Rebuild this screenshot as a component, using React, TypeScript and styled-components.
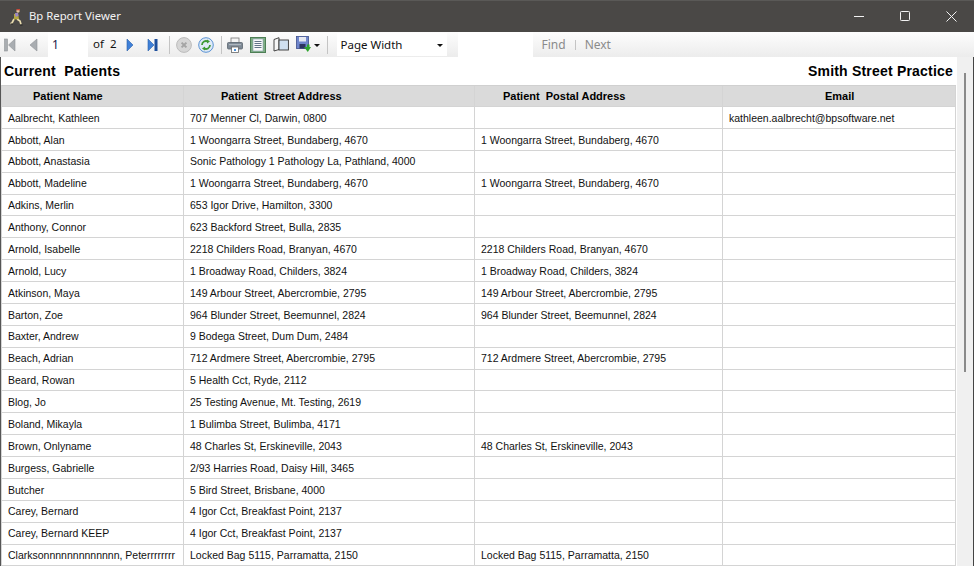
import React from 'react';
import styled, { createGlobalStyle } from 'styled-components';

const GlobalStyle = createGlobalStyle`
  html, body {
    margin: 0;
    height: 100%;
    overflow: hidden;
    background: #f0f0f0;
    font-family: "Liberation Sans", Arial, sans-serif;
  }
  #root { height: 100%; }
`;

const Window = styled.div`
  display: flex;
  flex-direction: column;
  width: 974px;
  height: 566px;
  overflow: hidden;
`;

const TitleBar = styled.div`
  display: flex;
  align-items: center;
  flex: 0 0 32px;
  box-sizing: border-box;
  height: 32px;
  padding-left: 10px;
  background: #4a4846;
  border-top: 1px solid #5a5957;
  color: #f2f2f2;
  font-family: "Noto Sans", "Open Sans", sans-serif;
  font-size: 11.3px;
`;

const TitleText = styled.span`
  margin: -2px 0 0 5px;
  flex: 1;
`;

const WindowButton = styled.div`
  display: flex;
  align-items: center;
  justify-content: center;
  width: 46px;
  height: 30px;
  margin-top: -1px;
`;

const Toolbar = styled.div`
  display: flex;
  align-items: center;
  flex: 0 0 25px;
  height: 25px;
  padding-left: 4px;
  box-sizing: border-box;
  background: linear-gradient(#fdfdfd, #ececec);
  font-size: 12px;
`;

const Tool = styled.div<{ $w: number; $ml?: number }>`
  display: flex;
  align-items: center;
  justify-content: center;
  flex: 0 0 ${p => p.$w}px;
  width: ${p => p.$w}px;
  margin-left: ${p => p.$ml ?? 0}px;
`;

const Sep = styled.div<{ $ml: number }>`
  flex: 0 0 1px;
  height: 18px;
  margin-left: ${p => p.$ml}px;
  background: #c4c4c4;
`;

const PageInput = styled.div`
  flex: 0 0 40px;
  box-sizing: border-box;
  height: 25px;
  margin-left: 10px;
  padding: 4px 0 0 4px;
  background: #fff;
  color: #1a1a4a;
  font-family: "Noto Sans", sans-serif;
  font-size: 12px;
`;

const OfLabel = styled.span<{ $ml: number }>`
  margin: -2px 0 0 ${p => p.$ml}px;
  color: #111;
  font-family: "Noto Sans", sans-serif;
  font-size: 11.5px;
`;

const Combo = styled.div`
  display: flex;
  align-items: center;
  justify-content: space-between;
  flex: 0 0 110px;
  box-sizing: border-box;
  height: 23px;
  margin-left: 9px;
  padding: 0 4px 0 4px;
  background: #fff;
  color: #111;
  font-family: "Noto Sans", sans-serif;
  font-size: 11.5px;
`;

const Caret = styled.span<{ $ml?: number }>`
  width: 0;
  height: 0;
  margin: 1px 0 0 ${p => p.$ml ?? 0}px;
  border-left: 3px solid transparent;
  border-right: 3px solid transparent;
  border-top: 3px solid #111;
`;

const FindBox = styled.div`
  flex: 0 0 75px;
  height: 25px;
  margin-left: 11px;
  background: #fff;
`;

const FindLink = styled.span<{ $ml: number }>`
  margin: 0 0 0 ${p => p.$ml}px;
  color: #8b8b8b;
  font-family: "Noto Sans", sans-serif;
  font-size: 12px;
`;

const FindSep = styled.span`
  width: 1px;
  height: 10px;
  margin-left: 9px;
  background: #c4c4c4;
`;

const Body = styled.div`
  display: flex;
  flex: 1;
  min-height: 0;
  background: #f0f0f0;
  border-left: 1px solid #555;
  border-right: 1px solid #444;
`;

const Report = styled.div`
  flex: 0 0 956px;
  height: 100%;
  background: #fff;
  overflow: hidden;
`;

const ScrollTrack = styled.div`
  flex: 1;
  padding: 16px 0 0 7px;
`;

const ScrollThumb = styled.div`
  width: 2px;
  height: 299px;
  background: #8a8a8a;
`;

const ReportHeader = styled.div`
  display: flex;
  align-items: center;
  justify-content: space-between;
  height: 28px;
  padding: 0 4px 0 3px;
  color: #000;
  font-size: 14px;
  font-weight: bold;
  letter-spacing: 0.2px;
  white-space: pre;
`;

const Grid = styled.div`
  width: 955px;
  border-left: 1px solid #d4d4d4;
  box-sizing: border-box;
`;

const Row = styled.div<{ $head?: boolean }>`
  display: grid;
  grid-template-columns: 182px 291px 248px 233px;
  box-sizing: border-box;
  height: ${p => (p.$head ? '22px' : '21.88px')};
  background: ${p => (p.$head ? '#dadada' : '#fff')};
  border-top: ${p => (p.$head ? '1px solid #d0d0d0' : 'none')};
  border-bottom: 1px solid #d4d4d4;
`;

const Cell = styled.div`
  display: flex;
  align-items: center;
  padding: 0.5px 0 0 6px;
  border-right: 1px solid #d4d4d4;
  color: #111;
  font-size: 10.5px;
  white-space: nowrap;
  overflow: hidden;
`;

const HeadCell = styled(Cell)<{ $pl: number }>`
  padding: 0 0 1px ${p => p.$pl}px;
  font-size: 11px;
  font-weight: bold;
  white-space: pre;
  color: #000;
`;

const Runner = () => (
  <svg width="14" height="18" viewBox="0 0 14 18">
    <path d="M4 11L2 15 0.5 15.5M7 11l3 2 1 3.5" fill="none" stroke="#e9dcae" strokeWidth="1.7" />
    <path d="M4 6l4-1 1 6-5 .5z" fill="#b4a83e" />
    <path d="M5 5l3 0 .5 3-3 .8z" fill="#9b86c4" />
    <circle cx="8" cy="3" r="1.7" fill="#e3c49a" />
    <path d="M6.5 1h3.5v1.3H6.5z" fill="#c8483a" />
    <path d="M1 16h2M10 17h2.5" stroke="#222" strokeWidth="1" />
  </svg>
);

const First = ({ c = '#a9adb1' }: { c?: string }) => (
  <svg width="12" height="14" viewBox="0 0 12 14">
    <rect x="0.5" y="1" width="3" height="12" fill={c} stroke="#909497" strokeWidth="0.6" />
    <path d="M11 1v12L4.5 7z" fill={c} stroke="#909497" strokeWidth="0.6" />
  </svg>
);

const Prev = () => (
  <svg width="9" height="14" viewBox="0 0 9 14">
    <path d="M8 1v12L1 7z" fill="#a9adb1" stroke="#909497" strokeWidth="0.6" />
  </svg>
);

const Next = () => (
  <svg width="9" height="14" viewBox="0 0 9 14">
    <path d="M1 1v12l6-6z" fill="#3f80d8" stroke="#2a5fa8" strokeWidth="0.6" />
  </svg>
);

const Last = () => (
  <svg width="11" height="14" viewBox="0 0 11 14">
    <path d="M1 1v12l6-6z" fill="#3f80d8" stroke="#2a5fa8" strokeWidth="0.6" />
    <rect x="7.5" y="1" width="3" height="12" fill="#1d4f9c" />
  </svg>
);

const Stop = () => (
  <svg width="16" height="16" viewBox="0 0 16 16">
    <circle cx="8" cy="8" r="7.4" fill="#d6d6d6" stroke="#bcbcbc" />
    <path d="M5.6 5.6l4.8 4.8M10.4 5.6l-4.8 4.8" stroke="#a4a4a4" strokeWidth="2" />
  </svg>
);

const Refresh = () => (
  <svg width="16" height="16" viewBox="0 0 16 16">
    <circle cx="8" cy="8" r="7.3" fill="#dfeaf7" stroke="#5b93d3" />
    <path d="M4 8a4 4 0 0 1 6-3.4" fill="none" stroke="#3f9a35" strokeWidth="1.8" />
    <path d="M9 2.5l3 2-3 2z" fill="#3f9a35" />
    <path d="M12 8a4 4 0 0 1-6 3.4" fill="none" stroke="#3f9a35" strokeWidth="1.8" />
    <path d="M7 13.5l-3-2 3-2z" fill="#3f9a35" />
  </svg>
);

const Printer = () => (
  <svg width="16" height="16" viewBox="0 0 16 16">
    <rect x="4" y="1" width="8" height="5" fill="#f4f4f4" stroke="#777" strokeWidth="0.8" />
    <rect x="0.5" y="5.5" width="15" height="6.5" rx="1" fill="#7e8a96" stroke="#5c6670" strokeWidth="0.8" />
    <rect x="2" y="7" width="12" height="1.2" fill="#aeb6bd" />
    <rect x="4.5" y="10" width="7" height="5.5" fill="#fff" stroke="#666" strokeWidth="0.8" />
    <rect x="7" y="12" width="2" height="2" fill="#4a90d9" />
  </svg>
);

const PageSetup = () => (
  <svg width="16" height="16" viewBox="0 0 16 16">
    <rect x="0.5" y="0.5" width="15" height="15" fill="#7fae84" stroke="#4e7f56" />
    <rect x="3" y="2" width="10" height="12" fill="#fafafa" stroke="#8aa0b0" strokeWidth="0.6" />
    <path d="M4.5 4.5h7M4.5 6.5h7M4.5 8.5h7M4.5 10.5h7" stroke="#51657a" strokeWidth="0.9" />
  </svg>
);

const Book = () => (
  <svg width="16" height="15" viewBox="0 0 16 15">
    <path d="M1 2.5L6 0.7V12.5L1 14z" fill="#f6f6f6" stroke="#333" strokeWidth="0.9" />
    <rect x="6" y="3" width="9.4" height="10" fill="#cfe0f1" stroke="#333" strokeWidth="0.9" />
  </svg>
);

const Save = () => (
  <svg width="16" height="17" viewBox="0 0 16 17">
    <rect x="0.5" y="0.5" width="12" height="12" fill="#6f86cc" stroke="#3e4f8d" strokeWidth="0.8" />
    <rect x="3" y="1" width="7" height="4.5" fill="#e6e9f2" />
    <rect x="3.5" y="8" width="6" height="4.5" fill="#2c3560" />
    <path d="M9 11h3V8.5h2.5V11H16l-3.2 5z" fill="#2fa52f" transform="translate(-1 0)" />
  </svg>
);

const Minimize = () => (
  <svg width="10" height="10" viewBox="0 0 10 10">
    <path d="M0 5.5h10" stroke="#f2f2f2" />
  </svg>
);

const Maximize = () => (
  <svg width="10" height="10" viewBox="0 0 10 10">
    <rect x="0.5" y="0.5" width="9" height="9" rx="0.8" fill="none" stroke="#f2f2f2" />
  </svg>
);

const Close = () => (
  <svg width="11" height="11" viewBox="0 0 11 11">
    <path d="M0.5 0.5l10 10M10.5 0.5l-10 10" stroke="#f2f2f2" />
  </svg>
);

const patients: [string, string, string, string][] = [
  ['Aalbrecht, Kathleen', '707 Menner Cl, Darwin, 0800', '', 'kathleen.aalbrecht@bpsoftware.net'],
  ['Abbott, Alan', '1 Woongarra Street, Bundaberg, 4670', '1 Woongarra Street, Bundaberg, 4670', ''],
  ['Abbott, Anastasia', 'Sonic Pathology 1 Pathology La, Pathland, 4000', '', ''],
  ['Abbott, Madeline', '1 Woongarra Street, Bundaberg, 4670', '1 Woongarra Street, Bundaberg, 4670', ''],
  ['Adkins, Merlin', '653 Igor Drive, Hamilton, 3300', '', ''],
  ['Anthony, Connor', '623 Backford Street, Bulla, 2835', '', ''],
  ['Arnold, Isabelle', '2218 Childers Road, Branyan, 4670', '2218 Childers Road, Branyan, 4670', ''],
  ['Arnold, Lucy', '1 Broadway Road, Childers, 3824', '1 Broadway Road, Childers, 3824', ''],
  ['Atkinson, Maya', '149 Arbour Street, Abercrombie, 2795', '149 Arbour Street, Abercrombie, 2795', ''],
  ['Barton, Zoe', '964 Blunder Street, Beemunnel, 2824', '964 Blunder Street, Beemunnel, 2824', ''],
  ['Baxter, Andrew', '9 Bodega Street, Dum Dum, 2484', '', ''],
  ['Beach, Adrian', '712 Ardmere Street, Abercrombie, 2795', '712 Ardmere Street, Abercrombie, 2795', ''],
  ['Beard, Rowan', '5 Health Cct, Ryde, 2112', '', ''],
  ['Blog, Jo', '25 Testing Avenue, Mt. Testing, 2619', '', ''],
  ['Boland, Mikayla', '1 Bulimba Street, Bulimba, 4171', '', ''],
  ['Brown, Onlyname', '48 Charles St, Erskineville, 2043', '48 Charles St, Erskineville, 2043', ''],
  ['Burgess, Gabrielle', '2/93 Harries Road, Daisy Hill, 3465', '', ''],
  ['Butcher', '5 Bird Street, Brisbane, 4000', '', ''],
  ['Carey, Bernard', '4 Igor Cct, Breakfast Point, 2137', '', ''],
  ['Carey, Bernard KEEP', '4 Igor Cct, Breakfast Point, 2137', '', ''],
  ['Clarksonnnnnnnnnnnnn, Peterrrrrrrr', 'Locked Bag 5115, Parramatta, 2150', 'Locked Bag 5115, Parramatta, 2150', ''],
];

export default function App() {
  return (
    <Window>
      <GlobalStyle />
      <TitleBar>
        <Runner />
        <TitleText>Bp Report Viewer</TitleText>
        <WindowButton><Minimize /></WindowButton>
        <WindowButton><Maximize /></WindowButton>
        <WindowButton><Close /></WindowButton>
      </TitleBar>
      <Toolbar>
        <Tool $w={12}><First /></Tool>
        <Tool $w={10} $ml={12}><Prev /></Tool>
        <PageInput>1</PageInput>
        <OfLabel $ml={5}>of</OfLabel>
        <OfLabel $ml={6}>2</OfLabel>
        <Tool $w={9} $ml={9}><Next /></Tool>
        <Tool $w={11} $ml={12}><Last /></Tool>
        <Sep $ml={11} />
        <Tool $w={16} $ml={6}><Stop /></Tool>
        <Tool $w={16} $ml={6}><Refresh /></Tool>
        <Sep $ml={7} />
        <Tool $w={16} $ml={5}><Printer /></Tool>
        <Tool $w={16} $ml={7}><PageSetup /></Tool>
        <Tool $w={16} $ml={7}><Book /></Tool>
        <Tool $w={16} $ml={7}><Save /></Tool>
        <Caret $ml={2} />
        <Sep $ml={7} />
        <Combo>
          <span>Page Width</span>
          <Caret />
        </Combo>
        <FindBox />
        <FindLink $ml={9}>Find</FindLink>
        <FindSep />
        <FindLink $ml={9}>Next</FindLink>
      </Toolbar>
      <Body>
        <Report>
          <ReportHeader>
            <span>Current  Patients</span>
            <span>Smith Street Practice</span>
          </ReportHeader>
          <Grid>
            <Row $head>
              <HeadCell $pl={31}>Patient Name</HeadCell>
              <HeadCell $pl={37}>Patient  Street Address</HeadCell>
              <HeadCell $pl={28}>Patient  Postal Address</HeadCell>
              <HeadCell $pl={102}>Email</HeadCell>
            </Row>
            {patients.map(p => (
              <Row key={p[0]}>
                {p.map((text, i) => (
                  <Cell key={i}>{text}</Cell>
                ))}
              </Row>
            ))}
          </Grid>
        </Report>
        <ScrollTrack>
          <ScrollThumb />
        </ScrollTrack>
      </Body>
    </Window>
  );
}
